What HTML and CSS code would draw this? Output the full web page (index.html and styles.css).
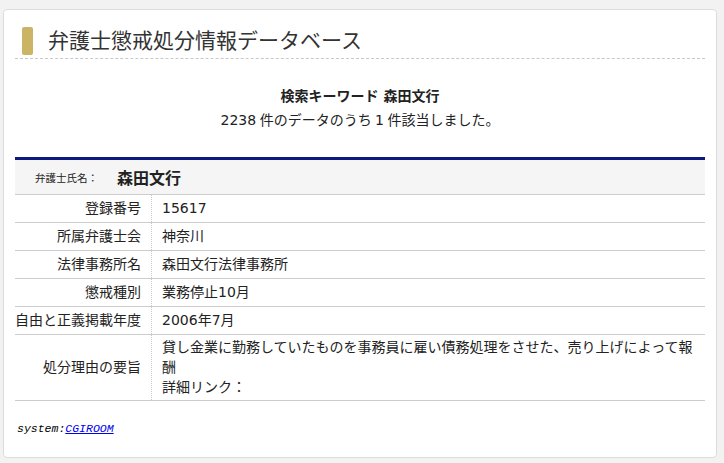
FILE: index.html
```html
<!DOCTYPE html>
<html lang="ja">
<head>
<meta charset="utf-8">
<title>弁護士懲戒処分情報データベース</title>
<link rel="stylesheet" href="styles.css">
</head>
<body>
<div class="card">
  <div class="heading">
    <span class="heading-bar"></span>
    <h1 class="heading-title">弁護士懲戒処分情報データベース</h1>
  </div>

  <div class="summary">
    <p class="summary-keyword">検索キーワード 森田文行</p>
    <p class="summary-count">2238 件のデータのうち 1 件該当しました。</p>
  </div>

  <table class="record">
    <tr class="record-head">
      <th colspan="2"><span class="record-head-label">弁護士氏名：</span><span class="record-head-name">森田文行</span></th>
    </tr>
    <tr>
      <td class="record-label">登録番号</td>
      <td class="record-value">15617</td>
    </tr>
    <tr>
      <td class="record-label">所属弁護士会</td>
      <td class="record-value">神奈川</td>
    </tr>
    <tr>
      <td class="record-label">法律事務所名</td>
      <td class="record-value">森田文行法律事務所</td>
    </tr>
    <tr>
      <td class="record-label">懲戒種別</td>
      <td class="record-value">業務停止10月</td>
    </tr>
    <tr>
      <td class="record-label">自由と正義掲載年度</td>
      <td class="record-value">2006年7月</td>
    </tr>
    <tr class="record-long">
      <td class="record-label">処分理由の要旨</td>
      <td class="record-value">貸し金業に勤務していたものを事務員に雇い債務処理をさせた、売り上げによって報酬<br>詳細リンク：</td>
    </tr>
  </table>

  <p class="footer">system:<a href="#" class="footer-link">CGIROOM</a></p>
</div>
</body>
</html>
```

FILE: styles.css
```css
html, body {
  margin: 0;
  padding: 0;
  background: #f2f2f2;
}

body {
  padding: 9px 7px 6px 3px;
  font-family: "DejaVu Sans", "Noto Sans CJK JP", sans-serif;
  font-size: 14px;
  color: #222;
}

.card {
  background: #fff;
  border: 1px solid #dcdcdc;
  border-radius: 4px;
  padding: 17px 11px 20px 11px;
}

/* page heading with gold marker */
.heading {
  display: flex;
  align-items: center;
  gap: 15px;
  padding: 0 0 3px 7px;
  border-bottom: 1px dashed #c8c8c8;
}

.heading-bar {
  width: 11px;
  height: 28px;
  border-radius: 2px;
  background: #cbb565;
  flex: none;
}

.heading-title {
  margin: 0;
  font-size: 21px;
  font-weight: normal;
  line-height: 28px;
  color: #333;
}

/* search summary */
.summary {
  margin: 25px 0 25px;
  text-align: center;
}

.summary p {
  margin: 0;
  line-height: 24px;
}

.summary-keyword {
  font-weight: bold;
}

.summary-count {
  word-spacing: -1px;
}

/* result table */
.record {
  width: 100%;
  border-collapse: collapse;
  border-top: 3px solid #0b1a7c;
}

.record td,
.record th {
  border-bottom: 1px solid #cccccc;
  padding: 0;
}

.record-head th {
  background: #f5f5f5;
  height: 34px;
  text-align: left;
  padding-left: 20px;
  font-weight: normal;
  vertical-align: middle;
}

.record-head-label {
  font-size: 10.5px;
  color: #222;
  vertical-align: middle;
}

.record-head-name {
  margin-left: 19px;
  font-size: 16px;
  font-weight: bold;
  vertical-align: middle;
}

.record-label {
  width: 126px;
  padding: 3px 10px 4px 0 !important;
  text-align: right;
  line-height: 20px;
  vertical-align: middle;
  border-right: 1px dotted #c8c8c8;
  white-space: nowrap;
}

.record-value {
  padding: 3px 5px 4px 10px !important;
  line-height: 20px;
  vertical-align: middle;
}

.record-long .record-value {
  padding: 2px 5px 3px 10px !important;
}

/* credit line */
.footer {
  margin: 20px 0 0 2px;
  font-family: "Liberation Mono", monospace;
  font-style: italic;
  font-size: 11.5px;
  line-height: 16px;
  color: #000;
}

.footer-link {
  color: #0000ee;
  text-decoration: underline;
}
```
